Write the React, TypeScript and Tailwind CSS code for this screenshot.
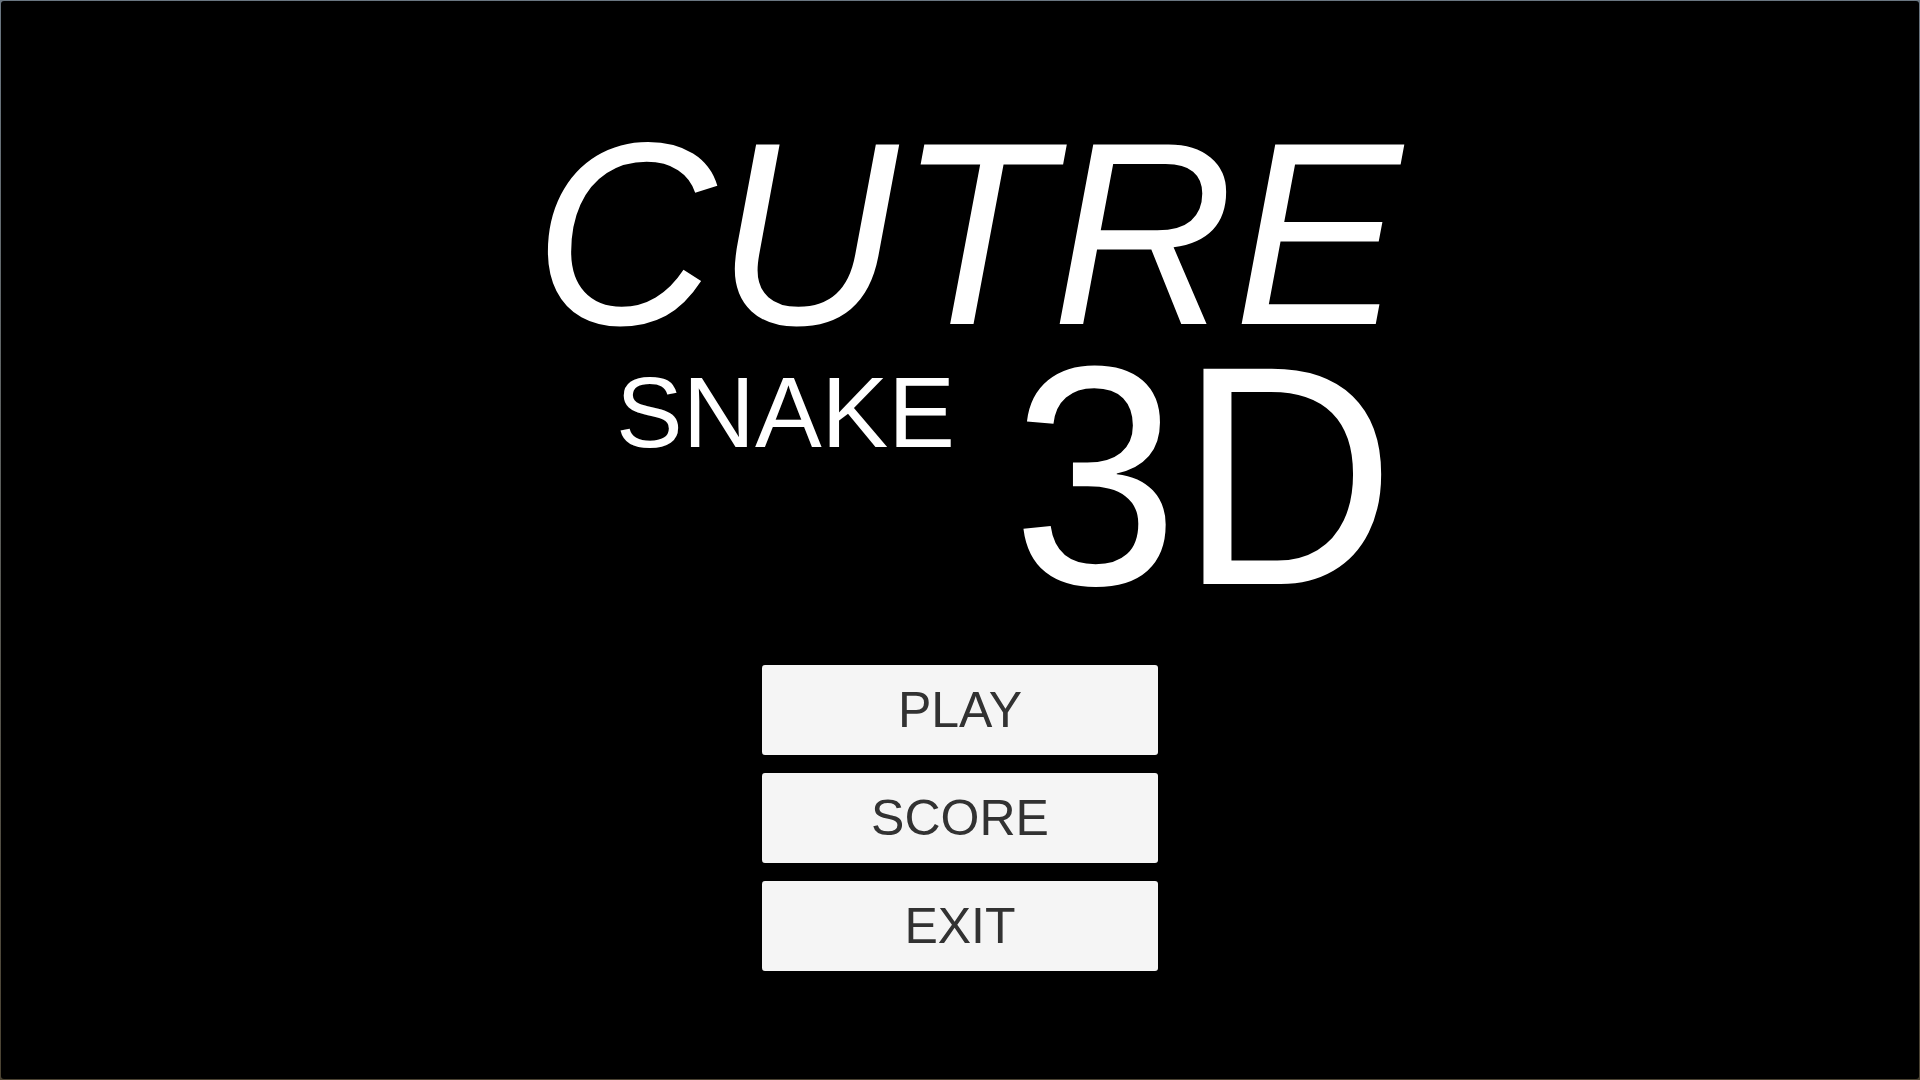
import React from 'react';

const buttons = ['PLAY', 'SCORE', 'EXIT'];

const App: React.FC = () => {
  return (
    <div className="h-screen w-full bg-gradient-to-b from-[#6a7681] to-[#4b4332] p-px">
      <div
        className="flex h-full w-full flex-col overflow-hidden rounded-[3px] bg-black text-white"
        style={{ fontFamily: '"Liberation Sans", Arial, sans-serif' }}
      >
        {/* title */}
        <div className="ml-[533px] mt-[136px] h-[200px] origin-[50%_187px] scale-y-[1.035] text-[252px] italic leading-[200px]">
          CUTRE
        </div>
        <div className="mt-[28px] flex items-start">
          <div className="ml-[615px] mt-[10px] text-[100px] leading-[75px]">SNAKE</div>
          <div className="ml-[57px] origin-[50%_219px] scale-y-[1.043] text-[300px] leading-[230px]">3D</div>
        </div>

        {/* menu */}
        <div className="mt-[70px] flex flex-col items-center gap-[18px]">
          {buttons.map((label) => (
            <button
              key={label}
              type="button"
              className="flex h-[90px] w-[396px] items-center justify-center rounded-[3px] bg-[#f5f5f5] text-[50px] leading-none text-[#323232]"
            >
              {label}
            </button>
          ))}
        </div>
      </div>
    </div>
  );
};

export default App;
